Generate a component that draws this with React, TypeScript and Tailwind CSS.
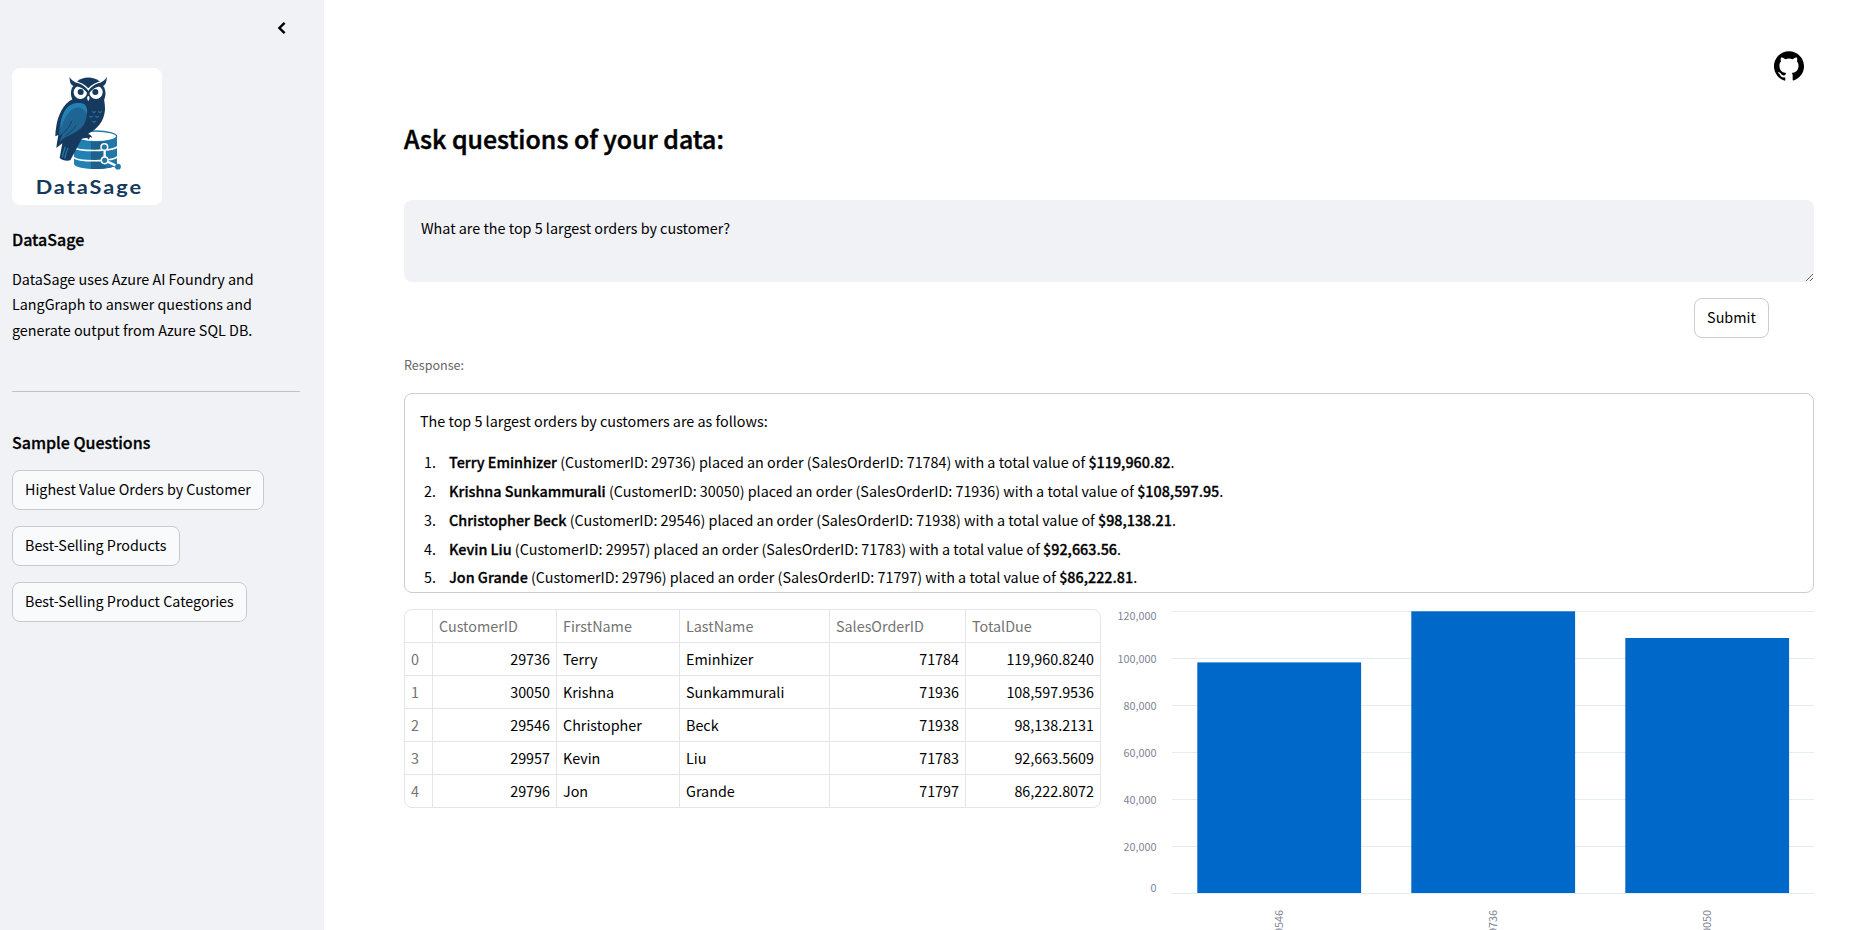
import { SiGithub } from "react-icons/si";

const samples = ["Highest Value Orders by Customer", "Best-Selling Products", "Best-Selling Product Categories"];

const orders = [
  { id: "29736", first: "Terry", last: "Eminhizer", order: "71784", due: "119,960.8240", total: "$119,960.82" },
  { id: "30050", first: "Krishna", last: "Sunkammurali", order: "71936", due: "108,597.9536", total: "$108,597.95" },
  { id: "29546", first: "Christopher", last: "Beck", order: "71938", due: "98,138.2131", total: "$98,138.21" },
  { id: "29957", first: "Kevin", last: "Liu", order: "71783", due: "92,663.5609", total: "$92,663.56" },
  { id: "29796", first: "Jon", last: "Grande", order: "71797", due: "86,222.8072", total: "$86,222.81" },
];

function Logo() {
  return (
    <svg viewBox="36 204 450 411" className="block h-[137px] w-[150px] rounded-lg bg-white">
      {/* database */}
      <path d="M222 412V492C226 512 347 512 351 492V412Z" fill="#2280b4" />
      <path d="M273 420H351V492C348 503 310 508 273 507Z" fill="#1c628c" />
      <path d="M318 422L351 412V490C345 499 332 502 318 504Z" fill="#2077a8" />
      <ellipse cx="287" cy="409" rx="63" ry="16" fill="#fff" stroke="#2077a8" strokeWidth="4" />
      <path d="M220 442C236 455 336 455 353 440M220 472C236 486 336 486 353 470" fill="none" stroke="#fff" strokeWidth="5" />
      {/* tail and body */}
      <path d="M217 298C190 312 174 345 169 378C167 390 166 400 166 409L175 405C173 418 170 432 169 444L187 430L179 474C188 482 200 484 211 481L245 417C256 414 262 412 266 419L270 411L277 413C274 405 268 403 264 402C290 388 312 366 315 330C315 318 314 308 312 298Z" fill="#163a5e" />
      <path d="M196 440C192 452 188 464 187 472M204 444C198 458 196 466 194 476" fill="none" stroke="#2077a8" strokeWidth="4" />
      {/* wing */}
      <path d="M252 312C264 322 263 350 254 370C244 390 220 400 205 408C192 412 184 420 181 426C180 416 186 408 188 402C182 404 179 406 178 408C176 380 184 350 196 330C208 312 232 304 252 312Z" fill="#1f6593" />
      <path d="M252 312C260 318 263 330 261 342C252 322 230 316 212 332C198 345 188 366 183 385C180 368 186 346 196 330C208 312 232 304 252 312Z" fill="#2380b4" />
      <path d="M216 362C210 378 200 390 188 402M228 376C222 388 210 398 196 408" fill="none" stroke="#163a5e" strokeWidth="2.5" />
      {/* chest feathers */}
      <path d="M277 334l5 4 5-4M295 334l5 4 5-4M268 348l5 4 5-4M286 348l5 4 5-4M277 363l5 4 5-4" fill="none" stroke="#2077a8" strokeWidth="3.5" />
      {/* head */}
      <path d="M232 244C250 229 280 229 298 244L312 262C319 276 317 292 310 304H220C212 292 210 276 217 262Z" fill="#163a5e" />
      <circle cx="241" cy="277" r="20" fill="#fff" />
      <circle cx="288" cy="277" r="20" fill="#fff" />
      <path d="M222 245C238 248 254 256 265 269C276 256 292 248 308 245" fill="none" stroke="#fff" strokeWidth="6" />
      <path d="M209 230C214 242 224 246 236 250C250 255 260 264 265 274C270 264 280 255 294 250C306 246 315 242 320 230C321 246 316 256 308 258C292 258 276 266 265 284C254 266 238 258 222 258C213 256 208 246 209 230Z" fill="#163a5e" />
      <circle cx="242" cy="276" r="9" fill="#163a5e" />
      <circle cx="286" cy="276" r="9" fill="#163a5e" />
      <path d="M265 287C270 291 270 296 265 303C260 296 260 291 265 287Z" fill="#fff" />
      {/* network nodes */}
      <path d="M314 441V481L354 500" fill="none" stroke="#2077a8" strokeWidth="13" />
      <path d="M314 441V481L354 500" fill="none" stroke="#fff" strokeWidth="7" />
      <circle cx="313" cy="441" r="10" fill="#2077a8" stroke="#fff" strokeWidth="4.5" />
      <circle cx="314" cy="481" r="10" fill="#2077a8" stroke="#fff" strokeWidth="4.5" />
      <circle cx="354" cy="500" r="8.5" fill="#2077a8" />
      <text
        x="107"
        y="581"
        textLength="322"
        lengthAdjust="spacingAndGlyphs"
        letterSpacing="5"
        fontSize="56"
        fontWeight="700"
        fill="#163a5e"
        className="font-['Lato',sans-serif]"
      >
        DataSage
      </text>
    </svg>
  );
}

function Sidebar() {
  return (
    <aside className="h-full w-[324px] shrink-0 bg-[#f0f2f6] pl-3 pr-6">
      <div className="mb-3 flex h-14 items-center justify-end pr-1.5">
        <svg viewBox="0 0 24 24" className="h-6 w-6" fill="none" stroke="#000" strokeWidth="2.4">
          <path d="M14.6 6.8L9.4 12l5.2 5.2" />
        </svg>
      </div>
      <Logo />
      <h3 className="mt-[22px] text-[16px] font-medium leading-6 [-webkit-text-stroke:0.3px]">DataSage</h3>
      <p className="mt-[14.65px] w-[260px] leading-[25.6px]">
        DataSage uses Azure AI Foundry and LangGraph to answer questions and generate output from Azure SQL DB.
      </p>
      <hr className="mt-[48.55px] border-[#c0c2c5]" />
      <h3 className="mt-[38px] text-[16px] font-medium leading-6 [-webkit-text-stroke:0.3px]">Sample Questions</h3>
      <div className="mt-4 flex flex-col items-start gap-4">
        {samples.map((s) => (
          <button key={s} className="h-10 whitespace-nowrap rounded-lg border border-[#c9cacc] bg-[#f9fafc] px-3 pb-0.5 text-[14.3px]">
            {s}
          </button>
        ))}
      </div>
    </aside>
  );
}

const cols = "grid grid-cols-[28px_124px_123px_150px_136px_134px]";
const cell = "border-r border-[#e4e5e7] px-1.5";

function OrdersTable() {
  return (
    <div className="h-[199px] w-[697px] shrink-0 overflow-hidden rounded-lg border border-[#e4e5e7] leading-8">
      <div className={`${cols} h-8 text-[#737373]`}>
        <div className={cell} />
        <div className={cell}>CustomerID</div>
        <div className={cell}>FirstName</div>
        <div className={cell}>LastName</div>
        <div className={cell}>SalesOrderID</div>
        <div className="px-1.5">TotalDue</div>
      </div>
      {orders.map((o, i) => (
        <div key={o.id} className={`${cols} h-[33px] border-t border-[#e4e5e7]`}>
          <div className={`${cell} text-[#737373]`}>{i}</div>
          <div className={`${cell} text-right`}>{o.id}</div>
          <div className={cell}>{o.first}</div>
          <div className={cell}>{o.last}</div>
          <div className={`${cell} text-right`}>{o.order}</div>
          <div className="px-1.5 text-right">{o.due}</div>
        </div>
      ))}
    </div>
  );
}

const ticks = [
  { label: "120,000", y: 2.5, base: 11.3 },
  { label: "100,000", y: 49.5, base: 54.3 },
  { label: "80,000", y: 96.5, base: 101.3 },
  { label: "60,000", y: 143.5, base: 148.3 },
  { label: "40,000", y: 190.5, base: 195.3 },
  { label: "20,000", y: 237.5, base: 242.3 },
  { label: "0", y: 284.5, base: 283.3 },
];

const bars = [
  { label: "29546", x: 80.3, top: 53.4 },
  { label: "29736", x: 294.3, top: 2.3 },
  { label: "30050", x: 508.3, top: 29 },
];

function OrdersChart() {
  return (
    <svg viewBox="0 0 697 321" className="block h-[321px] w-[697px] text-[10.8px]" fill="#808495">
      {ticks.map((t) => (
        <g key={t.label}>
          <path d={`M55 ${t.y}H697`} stroke="#e6eaf1" />
          <text x="39.5" y={t.base} textAnchor="end">
            {t.label}
          </text>
        </g>
      ))}
      {bars.map((b) => (
        <g key={b.label}>
          <rect x={b.x} y={b.top} width="163.8" height={284 - b.top} fill="#0068c9" />
          <text transform={`translate(${b.x + 85.8} 301) rotate(-90)`} textAnchor="end">
            {b.label}
          </text>
        </g>
      ))}
    </svg>
  );
}

export default function App() {
  return (
    <div className="flex h-screen overflow-hidden bg-white font-['Noto_Sans_CJK_SC',sans-serif] text-[14.35px] text-black">
      <Sidebar />
      <main className="flex min-w-0 grow flex-col pl-20 pr-[58px] pt-[51px]">
        <div className="flex justify-end pr-2.5">
          <SiGithub className="h-[30px] w-[30px]" />
        </div>
        <h1 className="mt-10 text-[24.9px] font-medium leading-[34px] [-webkit-text-stroke:0.5px]">
          Ask questions of your data:
        </h1>
        <textarea
          className="mt-[45px] block h-[82px] w-full shrink-0 resize-y rounded-lg bg-[#f0f2f6] px-[17px] py-4 leading-6 outline-none"
          defaultValue="What are the top 5 largest orders by customer?"
        />
        <div className="mt-4 flex justify-end pr-[45px]">
          <button className="h-10 w-[75px] rounded-lg border border-[#ccc] bg-white pb-0.5">Submit</button>
        </div>
        <div className="mt-[17px] text-[12.55px] leading-5 text-[#666]">Response:</div>
        <section className="mt-[18px] h-[200px] shrink-0 overflow-hidden rounded-lg border border-[#ccc] pl-[15px] pr-4 pt-3.5 leading-[25.6px]">
          <p>The top 5 largest orders by customers are as follows:</p>
          <ol className="mt-[13.9px] leading-[29px]">
            {orders.map((o, i) => (
              <li key={o.id} className="flex h-[29px] last:-mt-px">
                <span className="mr-3 w-[17px] pl-1">{i + 1}.</span>
                <span>
                  <b className="font-medium [-webkit-text-stroke:0.3px]">{`${o.first} ${o.last}`}</b>
                  {` (CustomerID: ${o.id}) placed an order (SalesOrderID: ${o.order}) with a total value of `}
                  <b className="font-medium [-webkit-text-stroke:0.3px]">{o.total}</b>.
                </span>
              </li>
            ))}
          </ol>
        </section>
        <div className="mt-4 flex gap-4">
          <OrdersTable />
          <OrdersChart />
        </div>
      </main>
    </div>
  );
}
